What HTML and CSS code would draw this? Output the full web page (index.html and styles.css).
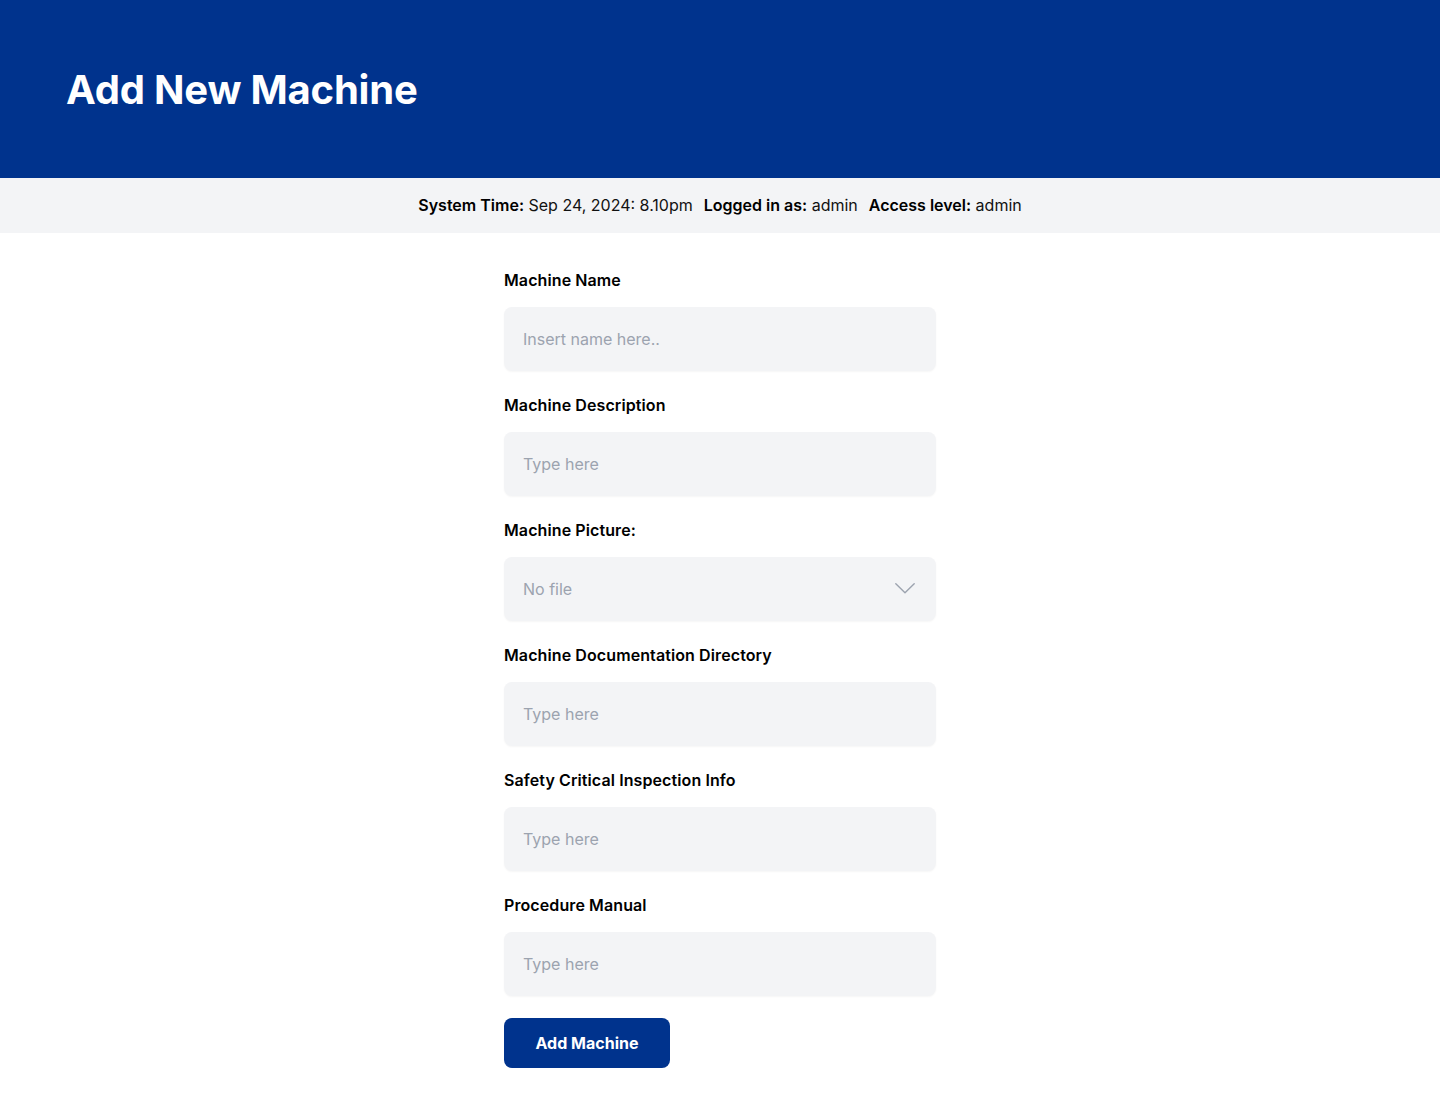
FILE: index.html
```html
<!DOCTYPE html>
<html lang="en">
<head>
<meta charset="utf-8">
<title>Add New Machine</title>
<link rel="stylesheet" href="styles.css">
</head>
<body>
<header class="page-header">
  <h1 class="page-title">Add New Machine</h1>
</header>
<div class="info-bar">
  <span class="info-item"><b>System Time:</b> Sep 24, 2024: 8.10pm</span>
  <span class="info-item"><b>Logged in as:</b> admin</span>
  <span class="info-item"><b>Access level:</b> admin</span>
</div>
<main class="form-wrap">
  <form class="machine-form">
    <div class="field">
      <label class="field-label" for="name">Machine Name</label>
      <input class="field-input" id="name" type="text" placeholder="Insert name here..">
    </div>
    <div class="field">
      <label class="field-label" for="desc">Machine Description</label>
      <input class="field-input" id="desc" type="text" placeholder="Type here">
    </div>
    <div class="field">
      <label class="field-label" for="pic">Machine Picture:</label>
      <div class="select-box" id="pic">
        <span class="select-text">No file</span>
        <svg class="chevron" width="20" height="11" viewBox="0 0 20 11" aria-hidden="true"><path d="M0.8 0.8 L10 9.8 L19.2 0.8" fill="none" stroke="#9ca3af" stroke-width="1.4" stroke-linecap="round" stroke-linejoin="round"/></svg>
      </div>
    </div>
    <div class="field">
      <label class="field-label" for="docs">Machine Documentation Directory</label>
      <input class="field-input" id="docs" type="text" placeholder="Type here">
    </div>
    <div class="field">
      <label class="field-label" for="safety">Safety Critical Inspection Info</label>
      <input class="field-input" id="safety" type="text" placeholder="Type here">
    </div>
    <div class="field">
      <label class="field-label" for="manual">Procedure Manual</label>
      <input class="field-input" id="manual" type="text" placeholder="Type here">
    </div>
    <button class="submit-btn" type="button">Add Machine</button>
  </form>
</main>
</body>
</html>
```
FILE: styles.css
```css
* { box-sizing: border-box; }
html, body { margin: 0; padding: 0; }
body {
  font-family: Inter, "Noto Sans", "Liberation Sans", sans-serif;
  color: #000;
  background: #fff;
}
.page-header {
  height: 178px;
  background: #00338d;
  display: flex;
  align-items: center;
  padding-left: 66px;
  padding-top: 2px;
}
.page-title {
  margin: 0;
  color: #fff;
  font-size: 40px;
  font-weight: 700;
  line-height: 48px;
  letter-spacing: -0.2px;
}
.info-bar {
  height: 55px;
  background: #f3f4f6;
  display: flex;
  justify-content: center;
  align-items: center;
  gap: 11px;
  padding-bottom: 2px;
  font-size: 16px;
  line-height: 24px;
  color: #111;
}
.info-item b { font-weight: 600; color: #000; }
.form-wrap {
  display: flex;
  justify-content: center;
  padding-top: 35px;
  padding-bottom: 50px;
}
.machine-form {
  width: 432px;
  display: flex;
  flex-direction: column;
}
.field {
  display: flex;
  flex-direction: column;
  margin-bottom: 22px;
}
.field-label {
  font-size: 16px;
  line-height: 24px;
  font-weight: 600;
  letter-spacing: 0.1px;
  margin-bottom: 15px;
  color: #000;
}
.field-input, .select-box {
  height: 64px;
  width: 100%;
  border: none;
  border-radius: 8px;
  background: #f3f4f6;
  box-shadow: 0 1px 2px rgba(0,0,0,0.04);
  padding: 0 19px;
  padding-top: 0;
  font-family: inherit;
  font-size: 16px;
  color: #111;
  outline: none;
}
.field-input::placeholder { color: #9ca3af; }
.select-box {
  display: flex;
  align-items: center;
  justify-content: space-between;
}
.select-text { color: #9ca3af; }
.chevron { margin-right: 2px; margin-bottom: 2px; }
.submit-btn {
  align-self: flex-start;
  width: 166px;
  height: 50px;
  border: none;
  border-radius: 8px;
  background: #00338d;
  color: #fff;
  font-family: inherit;
  font-size: 16px;
  font-weight: 700;
  cursor: pointer;
}
```
